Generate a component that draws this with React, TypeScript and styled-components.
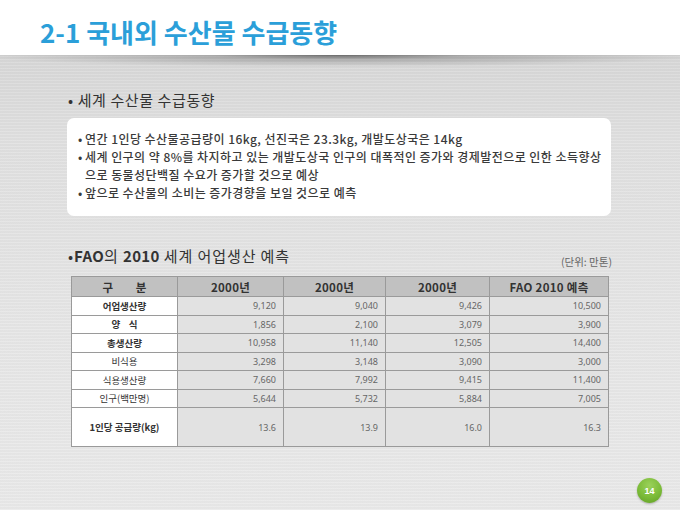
import React from "react";
import styled, { createGlobalStyle } from "styled-components";

const Global = createGlobalStyle`
  html, body { margin: 0; padding: 0; }
  body { width: 680px; height: 510px; overflow: hidden; font-family: "Noto Sans CJK KR", "Noto Sans", sans-serif; }
  #root { width: 680px; height: 510px; }
`;

const Slide = styled.div`
  width: 680px;
  height: 510px;
  display: flex;
  flex-direction: column;
  background: #fff;
`;

const Header = styled.header`
  height: 55px;
  flex: none;
  padding: 16px 0 0 40px;
  box-sizing: border-box;
  background: #fff;
`;

const Title = styled.h1`
  margin: 0;
  font-size: 26px;
  line-height: 32px;
  font-weight: 700;
  color: #2b9fd9;
  letter-spacing: 0;
`;

const Body = styled.main`
  position: relative;
  flex: 1;
  display: flex;
  flex-direction: column;
  padding: 0 18px 7px 67px;
  background:
    repeating-linear-gradient(0deg, rgba(255,255,255,0.12) 0px, rgba(255,255,255,0.12) 1px, rgba(0,0,0,0.015) 1px, rgba(0,0,0,0.015) 3px),
    linear-gradient(180deg, #d7d7d7 0%, #e0e0e0 20%, #e6e6e6 60%, #e9e9e9 100%);
  &::before {
    content: "";
    position: absolute;
    left: 0;
    right: 0;
    top: 0;
    height: 12px;
    background: radial-gradient(ellipse 55% 100% at 50% 0%, rgba(0,0,0,0.5) 0%, rgba(0,0,0,0.2) 35%, rgba(0,0,0,0) 100%);
    pointer-events: none;
  }
`;

const SubHeading = styled.h2`
  margin: 35px 0 0 1px;
  font-size: 15px;
  line-height: 20px;
  font-weight: 400;
  color: #333;
  letter-spacing: 0.6px;
`;

const InfoBox = styled.div`
  margin: 8px 0 0 0;
  width: 544px;
  box-sizing: border-box;
  padding: 12px 4px 14px 11px;
  background: #fff;
  border-radius: 7px;
`;

const Item = styled.div`
  display: flex;
  font-size: 12px;
  line-height: 18px;
  font-weight: 500;
  color: #3a3a3a;
  letter-spacing: 0.45px;
  white-space: nowrap;
`;

const Bullet = styled.span`
  flex: none;
  width: 7px;
`;

const SectionRow = styled.div`
  margin-top: 30px;
  width: 545px;
  display: flex;
  justify-content: space-between;
  align-items: flex-end;
`;

const SectionTitle = styled.h2`
  margin: 0 0 0 1px;
  font-size: 15px;
  line-height: 20px;
  font-weight: 400;
  color: #333;
  letter-spacing: 0.9px;
  b { font-weight: 700; letter-spacing: 0.3px; }
`;

const Unit = styled.span`
  font-size: 10.5px;
  line-height: 14px;
  color: #666;
  margin-bottom: -3px;
`;

const Table = styled.table`
  margin: 10px 0 0 4px;
  width: 537px;
  border-collapse: collapse;
  table-layout: fixed;
  border: 1px solid #9a9a9a;
`;

const HeadCell = styled.th<{ $spaced?: boolean }>`
  height: 19px;
  padding: 0;
  background: #c1c1c1;
  border: 1px solid #9a9a9a;
  font-size: 11.5px;
  font-weight: 700;
  color: #333;
  text-align: center;
  letter-spacing: ${(p) => (p.$spaced ? "10px" : "0.3px")};
  text-indent: ${(p) => (p.$spaced ? "10px" : "0")};
`;

const LabelCell = styled.td<{ $tall?: boolean; $bold?: boolean }>`
  height: ${(p) => (p.$tall ? "38px" : "17.5px")};
  padding: 0;
  background: #fff;
  border: 1px solid #9a9a9a;
  font-size: 9.5px;
  font-weight: ${(p) => (p.$bold ? 700 : 400)};
  color: #333;
  text-align: center;
  white-space: pre;
`;

const NumCell = styled.td`
  padding: 0 7px 0 0;
  background: #e2e2e2;
  border: 1px solid #9a9a9a;
  font-family: "Noto Sans", "Liberation Sans", sans-serif;
  font-size: 9px;
  color: #666;
  text-align: right;
`;

const Footer = styled.div`
  margin-top: auto;
  display: flex;
  justify-content: flex-end;
`;

const PageBadge = styled.div`
  width: 25px;
  height: 25px;
  border-radius: 50%;
  display: flex;
  align-items: center;
  justify-content: center;
  background: radial-gradient(circle at 50% 30%, #9bd15a 0%, #7bbb38 55%, #5f9c25 100%);
  box-shadow: 0 1px 2px rgba(0,0,0,0.25);
  color: #fff;
  font-family: "Liberation Sans", sans-serif;
  font-size: 9px;
  font-weight: 700;
`;

type Row = { label: string; bold: boolean; tall?: boolean; values: string[] };

const rows: Row[] = [
  { label: "어업생산량", bold: true, values: ["9,120", "9,040", "9,426", "10,500"] },
  { label: "양    식", bold: true, values: ["1,856", "2,100", "3,079", "3,900"] },
  { label: "총생산량", bold: true, values: ["10,958", "11,140", "12,505", "14,400"] },
  { label: "비식용", bold: false, values: ["3,298", "3,148", "3,090", "3,000"] },
  { label: "식용생산량", bold: false, values: ["7,660", "7,992", "9,415", "11,400"] },
  { label: "인구(백만명)", bold: false, values: ["5,644", "5,732", "5,884", "7,005"] },
  { label: "1인당 공급량(kg)", bold: true, tall: true, values: ["13.6", "13.9", "16.0", "16.3"] },
];

const colWidths = [106, 106, 102, 104, 119];

export default function App() {
  return (
    <>
      <Global />
      <Slide>
        <Header>
          <Title>2-1 국내외 수산물 수급동향</Title>
        </Header>
        <Body>
          <SubHeading>• 세계 수산물 수급동향</SubHeading>
          <InfoBox>
            <Item>
              <Bullet>•</Bullet>
              <span>연간 1인당 수산물공급량이 16kg, 선진국은 23.3kg, 개발도상국은 14kg</span>
            </Item>
            <Item>
              <Bullet>•</Bullet>
              <span>
                세계 인구의 약 8%를 차지하고 있는 개발도상국 인구의 대폭적인 증가와 경제발전으로 인한 소득향상
                <br />
                으로 동물성단백질 수요가 증가할 것으로 예상
              </span>
            </Item>
            <Item>
              <Bullet>•</Bullet>
              <span>앞으로 수산물의 소비는 증가경향을 보일 것으로 예측</span>
            </Item>
          </InfoBox>
          <SectionRow>
            <SectionTitle>
              •<b>FAO</b>의 <b>2010</b> 세계 어업생산 예측
            </SectionTitle>
            <Unit>(단위: 만톤)</Unit>
          </SectionRow>
          <Table>
            <colgroup>
              {colWidths.map((w, i) => (
                <col key={i} style={{ width: w }} />
              ))}
            </colgroup>
            <thead>
              <tr>
                <HeadCell $spaced>구 분</HeadCell>
                <HeadCell>2000년</HeadCell>
                <HeadCell>2000년</HeadCell>
                <HeadCell>2000년</HeadCell>
                <HeadCell>FAO 2010 예측</HeadCell>
              </tr>
            </thead>
            <tbody>
              {rows.map((r) => (
                <tr key={r.label}>
                  <LabelCell $bold={r.bold} $tall={r.tall}>
                    {r.label}
                  </LabelCell>
                  {r.values.map((v, i) => (
                    <NumCell key={i}>{v}</NumCell>
                  ))}
                </tr>
              ))}
            </tbody>
          </Table>
          <Footer>
            <PageBadge>14</PageBadge>
          </Footer>
        </Body>
      </Slide>
    </>
  );
}
